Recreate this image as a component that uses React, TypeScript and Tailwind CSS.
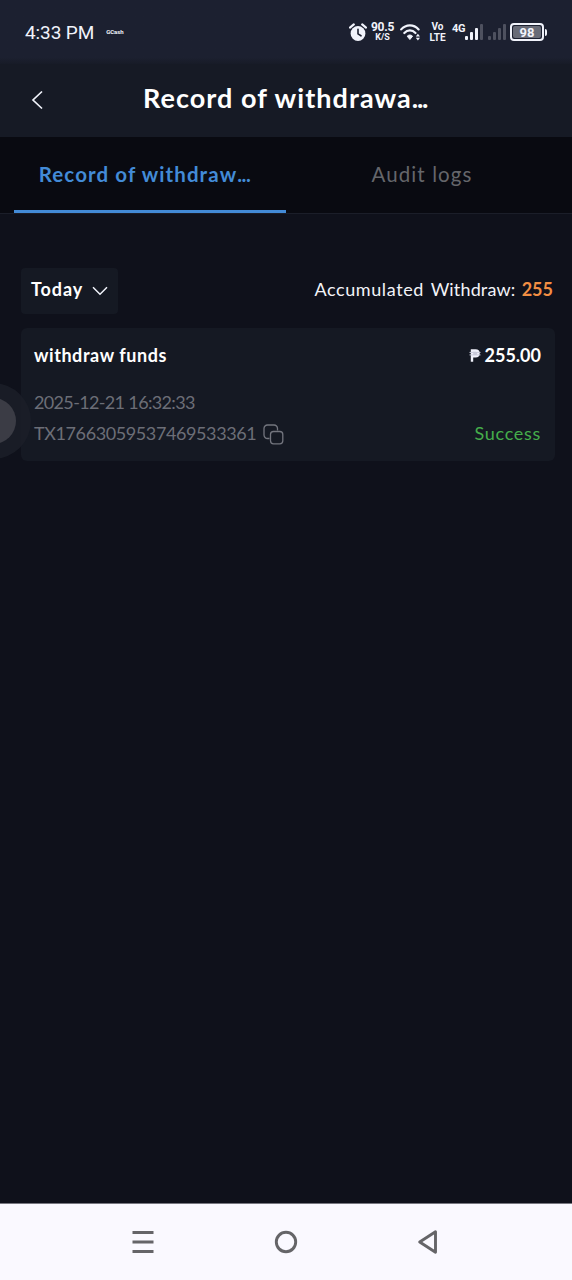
const signalBars = [4, 8, 12, 16];

function AlarmIcon() {
  return (
    <svg width="18" height="19" viewBox="0 0 18 19" fill="none">
      <circle cx="9" cy="10.5" r="7.4" fill="#f1f3fb" />
      <path d="M1 4.6 4.8 1.4M17 4.6 13.2 1.4" stroke="#f1f3fb" strokeWidth="2.2" strokeLinecap="round" />
      <path d="M9 6.3v4.6l3 1.9" stroke="#1c2030" strokeWidth="1.6" strokeLinecap="round" />
    </svg>
  );
}

function WifiIcon() {
  return (
    <svg width="21" height="17" viewBox="0 0 21 17" fill="none">
      <path d="M1.2 5.4C6-.1 13.7-.1 18.6 5.4" stroke="#f1f3fb" strokeWidth="2.2" strokeLinecap="round" />
      <path d="M4.3 9c3.2-3.4 8-3.4 11.2 0" stroke="#f1f3fb" strokeWidth="2.2" strokeLinecap="round" />
      <path d="M7.2 12.2c1.7-1.6 3.7-1.6 5.4 0L9.9 15.5z" fill="#f1f3fb" stroke="#f1f3fb" strokeLinejoin="round" />
      <path d="M15.8 12.6 17.9 9.8l2.1 2.8zM15.8 13.7H20l-2.100 2.800z" fill="#f1f3fb" />
    </svg>
  );
}

function Signal({ active }: { active: number }) {
  return (
    <div className="flex items-end gap-[2px]">
      {signalBars.map((h, i) => (
        <div key={h} className={`w-[3px] rounded-[1px] ${i < active ? "bg-[#f1f3fb]" : "bg-[#4e515f]"}`} style={{ height: h }} />
      ))}
    </div>
  );
}

function StatusBar() {
  return (
    <div className="flex h-16 items-center bg-linear-to-b from-[#1c2030] from-90% to-[#171b27] pl-[25px] pr-[25px] font-[Roboto,sans-serif] text-[#f1f3fb]">
      <span className="mt-px text-[19px] leading-6 tracking-[-0.1px]">4:33 PM</span>
      <span className="ml-3 text-[6px] font-bold leading-none tracking-[-0.1px]">GCash</span>
      <div className="ml-auto flex items-center">
        <AlarmIcon />
        <div className="ml-1 w-[23px] text-center font-bold">
          <div className="text-[12px] leading-[11px] tracking-[-0.3px]">90.5</div>
          <div className="text-[9px] leading-[9px]">K/S</div>
        </div>
        <div className="ml-[6px] mt-px"><WifiIcon /></div>
        <div className="ml-[8px] w-[17px] text-center text-[10px] font-bold leading-[11px]">
          <div>Vo</div>
          <div>LTE</div>
        </div>
        <span className="-mt-[8px] ml-[6px] w-[13px] text-[11px] font-bold leading-none tracking-[-0.3px]">4G</span>
        <Signal active={3} />
        <div className="ml-[5px]"><Signal active={0} /></div>
        <div className="ml-[4px] flex h-[18px] w-[34px] items-center justify-center rounded-[4px] border-2 border-[#f1f3fb] p-px">
          <div className="flex h-full w-full items-center justify-center rounded-[2px] bg-[#686b77] text-[13px] font-bold leading-none">98</div>
        </div>
        <div className="ml-px h-[7px] w-[2px] rounded-r-sm bg-[#f1f3fb]" />
      </div>
    </div>
  );
}

function Header() {
  return (
    <header className="grid h-[73px] grid-cols-[143px_286px_1fr] items-center bg-[#161a25]">
      <button className="-mt-0.5 ml-[31px]">
        <svg width="13" height="20" viewBox="0 0 13 20" fill="none" stroke="#f1f3fb" strokeWidth="1.7">
          <path d="M11 1.5 2 10l9 8.5" />
        </svg>
      </button>
      <h1 className="-mt-[6px] whitespace-nowrap text-[27px] font-bold leading-8 tracking-[1.05px] text-white">
        Record of withdrawa<span className="tracking-[-1.3px]">...</span>
      </h1>
    </header>
  );
}

function Tabs() {
  return (
    <nav className="flex h-[77px] border-b border-[#1b1e29] bg-[#090a11] px-[14px] text-[20.5px] leading-6">
      <button className="h-[76px] w-[272px] whitespace-nowrap border-b-[3px] border-[#438bd7] pr-[11px] font-bold tracking-[1.1px] text-[#438bd7]">
        Record of withdraw<span className="tracking-[-0.5px]">...</span>
      </button>
      <button className="h-[76px] w-[272px] whitespace-nowrap pb-[3px] tracking-[1.1px] text-[#65666b]">Audit logs</button>
    </nav>
  );
}

function CopyIcon() {
  return (
    <svg width="21" height="21" viewBox="0 0 21 21" fill="none" stroke="#73757e" strokeWidth="1.3">
      <path d="M6.5 14.5h-2A3.5 3.5 0 0 1 1 11V4.500A3.500 3.500 0 0 1 4.500 1H11a3.500 3.500 0 0 1 3.500 3.500v2" />
      <rect x="7.5" y="7.5" width="12.3" height="12.3" rx="3" />
    </svg>
  );
}

function PesoIcon() {
  return (
    <svg width="12" height="13" viewBox="0 0 12 13" fill="none">
      <path d="M3 12.800V1.500h3.600a2.700 2.700 0 0 1 0 5.800H3" fill="#c9cada" stroke="#f1f2fc" strokeWidth="2.4" />
      <path d="M.5 3.400h11M.5 5.900h11" stroke="#c9cada" strokeWidth="1" />
    </svg>
  );
}

function RecordCard() {
  return (
    <article className="ml-[21px] mr-[17px] mt-[14px] flex h-[133px] flex-col rounded-md bg-[#151923] pl-[13px] pr-[14px] text-[18px]">
      <div className="mt-[15px] flex h-6 items-center justify-between font-bold text-white">
        <span className="tracking-[0.56px]">withdraw funds</span>
        <span className="flex items-center gap-1">
          <PesoIcon />
          255.00
        </span>
      </div>
      <div className="mt-[23px] h-6 leading-6 tracking-[-0.65px] text-[#6c6e77]">2025-12-21 16:32:33</div>
      <div className="mt-[7px] flex h-6 items-center text-[#6c6e77]">
        <span className="tracking-[-0.4px]">TX17663059537469533361</span>
        <button className="ml-[7px] mt-[3px]"><CopyIcon /></button>
        <span className="ml-auto tracking-[0.7px] text-[#45ae4b]">Success</span>
      </div>
    </article>
  );
}

function NavigationBar() {
  return (
    <div className="flex h-[77px] items-center justify-center gap-[119px] border-t border-[#777780] bg-[#faf9ff]">
      <svg width="24" height="24" viewBox="0 0 24 24" stroke="#656568" strokeWidth="2.8">
        <path d="M1.5 2.5h21M1.5 12h21M1.5 21.5h21" />
      </svg>
      <svg width="24" height="24" viewBox="0 0 24 24" fill="none" stroke="#656568" strokeWidth="2.9">
        <circle cx="12" cy="12" r="9.7" />
      </svg>
      <svg width="24" height="24" viewBox="0 0 24 24" fill="none" stroke="#656568" strokeWidth="2.9" strokeLinejoin="round">
        <path d="M18.500 1.700v20.600L2.700 12z" />
      </svg>
    </div>
  );
}

export default function App() {
  return (
    <div className="relative flex h-[1280px] w-[572px] flex-col overflow-hidden bg-[#0f111b] font-[Lato,sans-serif]">
      <StatusBar />
      <Header />
      <Tabs />
      <main className="flex-1">
        <div className="mt-[54px] flex h-[46px] items-center justify-between pl-[21px] pr-[19px] text-[18px]">
          <button className="flex h-[46px] w-[97px] items-center gap-[9px] rounded-sm bg-[#151923] pb-[3px] pl-[10px] font-bold text-white">
            <span className="tracking-[0.9px]">Today</span>
            <svg className="mt-0.5 shrink-0" width="16" height="10" viewBox="0 0 16 10" fill="none" stroke="#f1f3fb" strokeWidth="1.5">
              <path d="M1 1.300 8 8.300l7-7" />
            </svg>
          </button>
          <div className="pb-[3px] text-[#f3f3f8] [word-spacing:1.5px]">
            <span className="tracking-[0.6px]">Accumulated </span>
            <span className="tracking-[0.15px]">Withdraw: </span>
            <span className="font-bold text-[#f28e43]">255</span>
          </div>
        </div>
        <RecordCard />
      </main>
      <NavigationBar />

      {/* floating assist button, half off the left edge */}
      <div className="absolute left-[-45px] top-[383px] flex size-[76px] items-center justify-center rounded-full bg-[#1b1e28]/90">
        <div className="size-[46px] rounded-full bg-[#3b3c45]" />
      </div>
    </div>
  );
}
